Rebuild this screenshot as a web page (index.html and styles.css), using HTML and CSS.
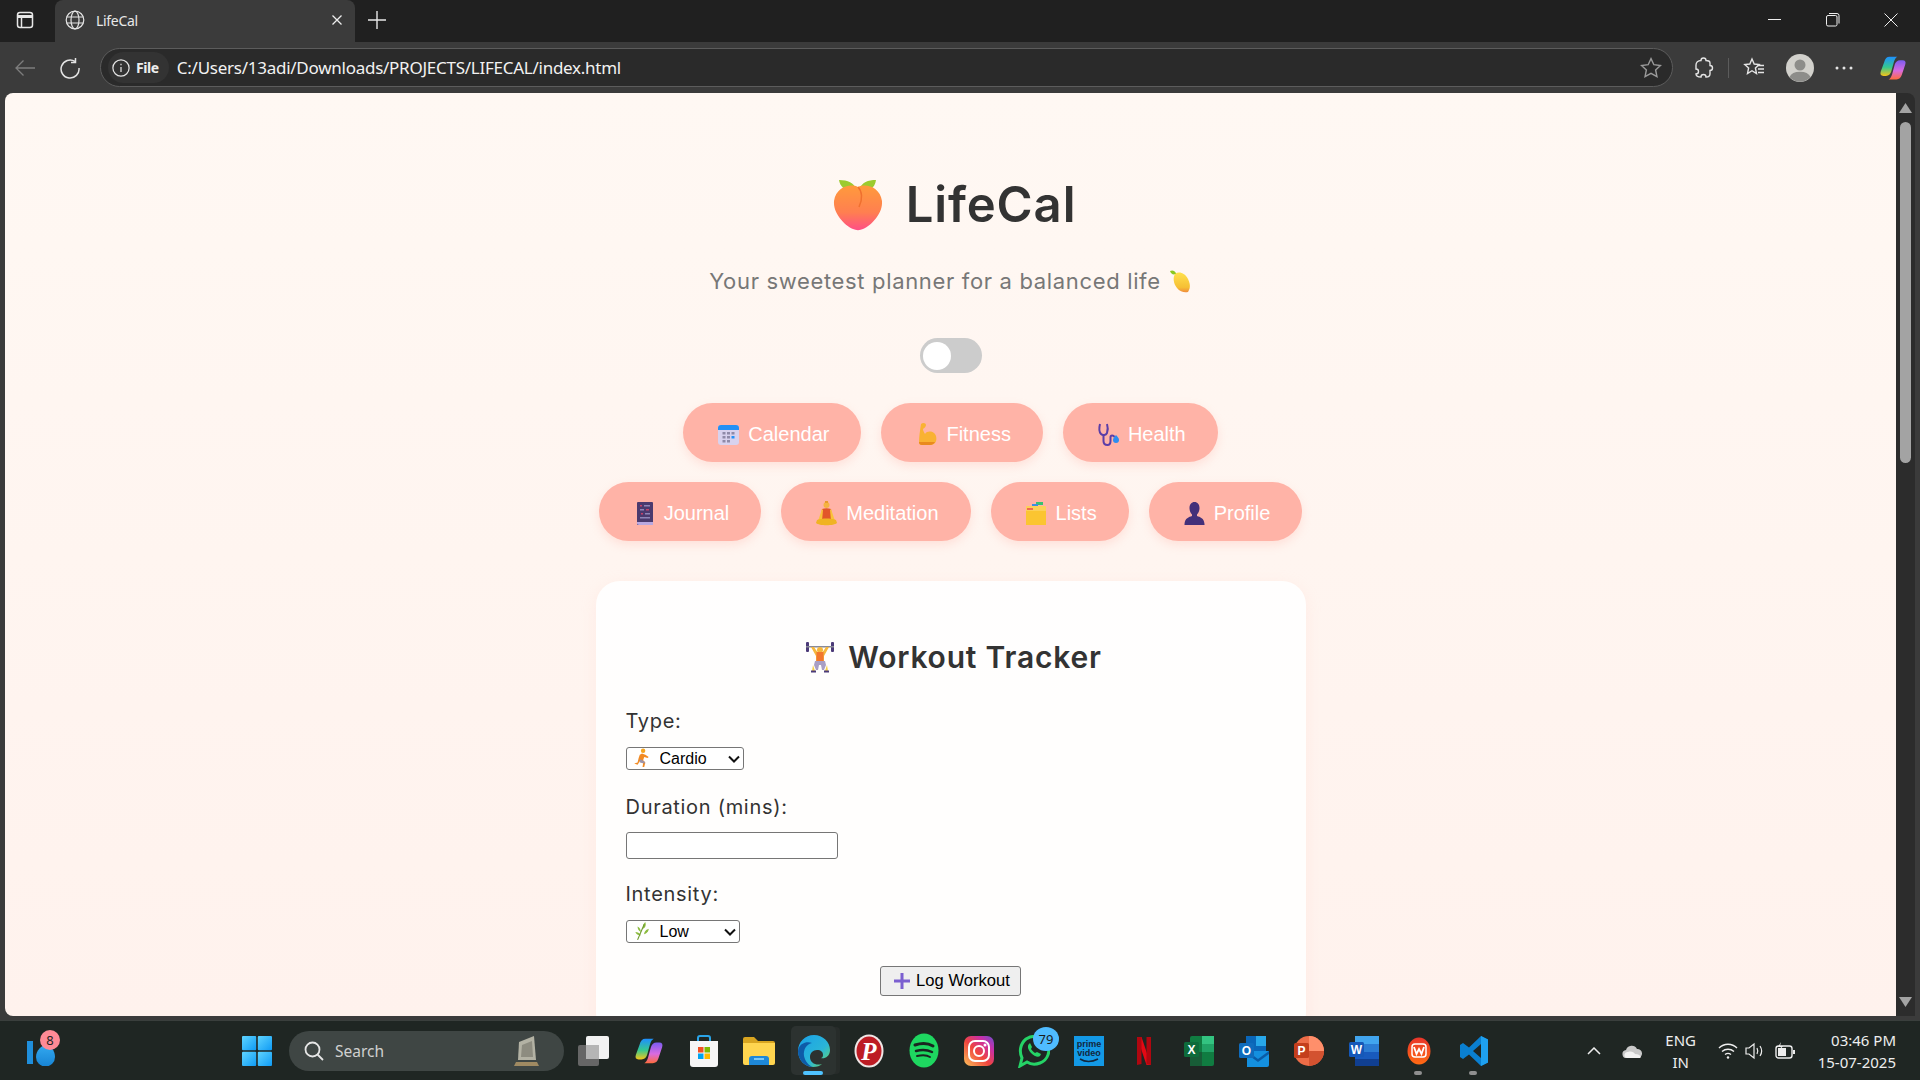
FILE: index.html
```html
<!DOCTYPE html>
<html lang="en">
<head>
    <meta charset="UTF-8">
    <title>LifeCal</title>
    <link rel="stylesheet" href="styles.css">
</head>
<body>
    <!-- shared gradients and the copilot logo -->
    <svg class="sprite" aria-hidden="true">
        <defs>
            <linearGradient id="peachFill" x1="0" y1="0" x2="0" y2="1"><stop offset="0" stop-color="#ff9a3c"/><stop offset=".6" stop-color="#ff7f50"/><stop offset="1" stop-color="#ff4f86"/></linearGradient>
            <linearGradient id="lemonFill" x1="0" y1="0" x2="0" y2="1"><stop offset="0" stop-color="#ffe14d"/><stop offset=".75" stop-color="#f6bf35"/><stop offset="1" stop-color="#f08a3c"/></linearGradient>
            <linearGradient id="copilotA" x1="0" y1="0" x2="0" y2="1"><stop offset="0" stop-color="#1e8fff"/><stop offset=".55" stop-color="#35c98f"/><stop offset="1" stop-color="#f5c518"/></linearGradient>
            <linearGradient id="copilotB" x1="0" y1="0" x2="0" y2="1"><stop offset="0" stop-color="#7a5cf0"/><stop offset=".55" stop-color="#d96be0"/><stop offset="1" stop-color="#ff6b3d"/></linearGradient>
            <linearGradient id="edgeFill" x1="0" y1="0" x2="1" y2="1"><stop offset="0" stop-color="#1aa0e8"/><stop offset=".6" stop-color="#2ab5d8"/><stop offset="1" stop-color="#6fdc5a"/></linearGradient>
            <linearGradient id="igFill" x1="0" y1="1" x2="1" y2="0"><stop offset="0" stop-color="#fdc35a"/><stop offset=".45" stop-color="#f0453e"/><stop offset=".75" stop-color="#c92fa8"/><stop offset="1" stop-color="#6a4fd0"/></linearGradient>
            <linearGradient id="winFill" x1="0" y1="0" x2="1" y2="1"><stop offset="0" stop-color="#5fd4ff"/><stop offset="1" stop-color="#0f9bf5"/></linearGradient>
            <linearGradient id="dropFill" x1="0" y1="0" x2="0" y2="1"><stop offset="0" stop-color="#33a9f0"/><stop offset="1" stop-color="#1784d4"/></linearGradient>
            <linearGradient id="wpsFill" x1="0" y1="0" x2="0" y2="1"><stop offset="0" stop-color="#e8352b"/><stop offset="1" stop-color="#ff6a13"/></linearGradient>
            <symbol id="copilot" viewBox="0 0 32 32">
                <path fill="url(#copilotA)" d="M12 3h9c-2 1-3 3-4 6l-3 11c-1 3-3 5-6 5H5c-3 0-4-2-3-5L6 9c1-4 3-6 6-6z"/>
                <path fill="url(#copilotB)" d="M20 29h-9c2-1 3-3 4-6l3-11c1-3 3-5 6-5h3c3 0 4 2 3 5l-4 12c-1 3-3 5-6 5z"/>
            </symbol>
        </defs>
    </svg>

    <header class="tabstrip">
        <svg class="tab-menu" width="18" height="18" viewBox="0 0 18 18" fill="none" stroke="#e6e6e6" stroke-width="1.5"><rect x="1.5" y="1.5" width="15" height="15" rx="2.5"/><path d="M1.5 5.5h15" stroke-width="3"/><path d="M5.5 6v10"/></svg>
        <div class="tab">
            <svg width="20" height="20" viewBox="0 0 20 20" fill="none" stroke="#e4e4e4" stroke-width="1.2"><circle cx="10" cy="10" r="8.8"/><ellipse cx="10" cy="10" rx="4" ry="8.8"/><path d="M1.6 7h16.800M1.600 13h16.800"/></svg>
            <span class="tab-title">LifeCal</span>
            <svg class="tab-close" width="12" height="12" viewBox="0 0 12 12" stroke="#eee" stroke-width="1.3"><path d="M1.500 1.500l9 9M10.500 1.500l-9 9"/></svg>
        </div>
        <svg class="tab-new" width="18" height="18" viewBox="0 0 18 18" stroke="#e8e8e8" stroke-width="1.4"><path d="M9 0v18M0 9h18"/></svg>
        <div class="window-controls">
            <svg width="14" height="14" viewBox="0 0 14 14" stroke="#eee" stroke-width="1"><path d="M0 6.500h13"/></svg>
            <svg width="14" height="14" viewBox="0 0 14 14" fill="none" stroke="#eee" stroke-width="1"><rect x=".5" y="2.500" width="10.500" height="10.500" rx="1.500"/><path d="M3 .5h8a2 2 0 0 1 2 2v8"/></svg>
            <svg width="14" height="14" viewBox="0 0 14 14" stroke="#eee" stroke-width="1"><path d="M.5.5l13 13M13.500.5l-13 13"/></svg>
        </div>
    </header>

    <div class="toolbar">
        <svg class="nav-btn" width="22" height="18" viewBox="0 0 22 18" fill="none" stroke="#7d7d7d" stroke-width="1.3"><path d="M21 9H2M9.500 1.500L2 9l7.500 7.500"/></svg>
        <svg class="nav-btn reload" width="22" height="22" viewBox="0 0 22 22" fill="none" stroke="#e4e4e4" stroke-width="1.5"><path d="M16 4.500A9 9 0 1 0 20 11"/><path d="M16.500 1v4.500H12"/></svg>
        <div class="omnibox">
            <div class="site-chip">
                <svg width="18" height="18" viewBox="0 0 16 16" fill="none" stroke="#e4e4e4" stroke-width="1.100"><circle cx="8" cy="8" r="7.200"/><path d="M8 7v4.500M8 4.200v1.300"/></svg>
                <span>File</span>
            </div>
            <span class="url">C:/Users/13adi/Downloads/PROJECTS/LIFECAL/index.html</span>
            <svg class="omni-star" width="22" height="22" viewBox="0 0 20 20" fill="none" stroke="#9a9a9a" stroke-width="1.300"><path d="M10 1.500l2.600 5.500 6 .7-4.400 4.100 1.200 6-5.400-3-5.400 3 1.200-6L1.400 7.700l6-.7z"/></svg>
        </div>
        <div class="toolbar-icons">
            <svg width="22" height="22" viewBox="0 0 22 22" fill="none" stroke="#e4e4e4" stroke-width="1.400"><path d="M9 3.500a2.500 2.500 0 0 1 5 0c2 0 4 .3 4 2.500v2.500a2.500 2.500 0 0 1 0 5V17c0 2-2 3-4 3a2.500 2.500 0 0 0-5 0c-3 0-5-1-5-3a2.500 2.500 0 0 0 0-5V8c0-2.500 2-4.500 5-4.500z"/></svg>
            <span class="toolbar-sep"></span>
            <svg width="22" height="22" viewBox="0 0 22 22" fill="none" stroke="#e4e4e4" stroke-width="1.400"><path d="M9 2l2.200 5 5 .5-3.800 3.500 1.100 5.500-4.500-2.800-4.500 2.800 1.100-5.500L1.800 7.500l5-.5z"/><path d="M14.500 8.500h6.500M15 12h6M15 15.500h6"/></svg>
            <svg class="avatar" width="28" height="28" viewBox="0 0 28 28"><circle cx="14" cy="14" r="14" fill="#d2d1cc"/><circle cx="14" cy="11" r="5.500" fill="#8d8d8a"/><path d="M3.500 23a11 7.500 0 0 1 21 0 14 14 0 0 1-21 0z" fill="#8d8d8a"/></svg>
            <svg width="18" height="4" viewBox="0 0 18 4" fill="#e4e4e4"><circle cx="2" cy="2" r="1.500"/><circle cx="9" cy="2" r="1.500"/><circle cx="16" cy="2" r="1.500"/></svg>
            <svg class="toolbar-copilot" width="28" height="28"><use href="#copilot"/></svg>
        </div>
    </div>

    <div class="browser-body">
        <main class="page">
            <h1 class="brand">
                <svg class="brand-icon" width="52" height="52" viewBox="0 0 52 52">
                    <path fill="#9ccb2f" d="M24 10C22 4 16 1 7 1c1 7 7 12 17 11zM27 11C30 3 36 1 44 1c-1 8-7 12-15 12z"/>
                    <path fill="url(#peachFill)" d="M26 8c8-4 22 0 24 14 1 12-10 24-19 28-3 1.500-7 1.500-10 0C12 46 1 34 2 22 4 8 18 4 26 8z"/>
                    <path fill="none" stroke="#f0702f" stroke-width="1.500" d="M26 8c4 4 5 12 1 20"/>
                </svg>
                <span>LifeCal</span>
            </h1>
            <p class="tagline">
                <span>Your sweetest planner for a balanced life</span>
                <svg width="22" height="24" viewBox="0 0 22 24"><path fill="#8cc820" d="M6 4C4 1 2 1 0 2c1 3 3 4 6 3z"/><path fill="url(#lemonFill)" d="M5 5c4-3 10-1 13 5 3 6 2 10 0 13-3 1-8 0-11-4C3 14 3 8 5 5z"/></svg>
            </p>
            <div class="toggle"><span class="toggle-knob"></span></div>

            <nav class="tabs">
                <div class="tabs-row">
                    <a class="pill" href="#calendar">
                        <svg class="pill-icon" viewBox="0 0 27 27"><rect x="3" y="4" width="21" height="20" rx="3" fill="#d8d2ee"/><path d="M3 9V7a3 3 0 0 1 3-3h15a3 3 0 0 1 3 3v2z" fill="#2490f5"/><g fill="#8f8aa8"><rect x="7.500" y="11" width="3" height="2.500"/><rect x="12" y="11" width="3" height="2.500"/><rect x="16.500" y="11" width="3" height="2.500"/><rect x="7.500" y="15" width="3" height="2.500"/><rect x="12" y="15" width="3" height="2.500"/><rect x="16.500" y="15" width="3" height="2.500" fill="#2490f5"/><rect x="7.500" y="19" width="3" height="2.500"/><rect x="12" y="19" width="3" height="2.500"/></g></svg>
                        Calendar
                    </a>
                    <a class="pill" href="#fitness">
                        <svg class="pill-icon" viewBox="0 0 27 27"><path fill="#f9b233" d="M8 3c2-2 5-1 5 1 0 2-2 3-3 4 0 2 1 3 2 5 2-3 6-3 9-1 3 2 3 8 1 10-2 2-5 2-8 2H9c-2 0-3-1-3-3 0-5 1-12 2-18z"/><path fill="#e98a1f" d="M6 21h16c-2 3-4 3-7 3H9c-2 0-3-1-3-3z"/></svg>
                        Fitness
                    </a>
                    <a class="pill" href="#health">
                        <svg class="pill-icon" viewBox="0 0 27 27" fill="none" stroke="#5b3ea8" stroke-width="2"><path d="M5 3c-1 4-1 8 1 10 2 2 5 1 6-1 1-3 1-6 0-9"/><path d="M8.500 14v6c0 3 2 4 4 4s3-1 3-4v-4c0-2 3-2 4 0"/><path fill="#2c8df0" stroke="none" d="M21 14c1 1 3 3 3 5a3 3 0 0 1-6 0c0-2 2-4 3-5z"/></svg>
                        Health
                    </a>
                </div>
                <div class="tabs-row">
                    <a class="pill" href="#journal">
                        <svg class="pill-icon" viewBox="0 0 27 27"><rect x="6" y="2" width="16" height="23" rx="1" fill="#4a3a6e"/><path d="M6 22h16v3H8c-1 0-2-1-2-1.500z" fill="#b9a8e0"/><g fill="#c8436b"><rect x="9" y="5" width="2" height="1.500"/><rect x="15" y="9" width="3" height="1.500"/><rect x="10" y="13" width="2" height="1.500"/></g><g fill="#8f86b8"><rect x="13" y="5" width="6" height="1.500"/><rect x="9" y="9" width="4" height="1.500"/><rect x="14" y="13" width="5" height="1.500"/><rect x="9" y="17" width="10" height="1.500"/></g></svg>
                        Journal
                    </a>
                    <a class="pill" href="#meditation">
                        <svg class="pill-icon" viewBox="0 0 27 27"><circle cx="13.500" cy="5" r="3" fill="#f5b342"/><rect x="12" y="1" width="3" height="2" fill="#e89a2c"/><path d="M9 9c3-1 6-1 9 0l1 10H8z" fill="#e2562a"/><path d="M9 9L5 21h4l1-11zM18 9l4 12h-4l-1-11z" fill="#f9c23c"/><path d="M4 20c5-2 14-2 19 0l1 3c-3 3-18 3-21 0z" fill="#f0b323"/></svg>
                        Meditation
                    </a>
                    <a class="pill" href="#lists">
                        <svg class="pill-icon" viewBox="0 0 27 27"><rect x="13" y="2" width="7" height="3" fill="#38c172"/><rect x="9" y="4" width="6" height="3" fill="#3b8ee0"/><rect x="3" y="6" width="20" height="19" rx="1" fill="#fcd058"/><rect x="4" y="8" width="6" height="2" fill="#ef6a50"/><rect x="3" y="11" width="20" height="14" fill="#fbc531"/></svg>
                        Lists
                    </a>
                    <a class="pill" href="#profile">
                        <svg class="pill-icon" viewBox="0 0 27 27"><path fill="#43307a" d="M13.500 2c3 0 5 2.500 5 6 0 3-1 5-2.500 6.500V16c3 1 7 2 7.500 8v1H3.500v-1c.5-6 4.500-7 7.500-8v-1.500C9.500 13 8.500 11 8.500 8c0-3.500 2-6 5-6z"/></svg>
                        Profile
                    </a>
                </div>
            </nav>

            <section class="card">
                <h2 class="card-title">
                    <svg width="32" height="32" viewBox="0 0 32 32">
                        <g fill="#4b3a78"><rect x="2" y="1" width="3" height="10" rx="1"/><rect x="27" y="1" width="3" height="10" rx="1"/></g>
                        <rect x="2" y="5" width="28" height="1.500" fill="#8a8a96"/>
                        <path d="M7 6h3l4 6h4l4-6h3l-5 9v5h-8v-5z" fill="#f6b73c"/>
                        <circle cx="16" cy="9" r="3" fill="#f6b73c"/>
                        <rect x="12.500" y="11" width="7" height="9" fill="#f2762e"/>
                        <path d="M11 20h10l1 4-2 5h-2l-1-5h-2l-1 5h-2l-2-5z" fill="#a99fc4"/>
                        <path d="M9 24l2 6H8zM23 24l-2 6h3z" fill="#f6cf4a"/>
                        <g fill="#4b3a78"><rect x="7" y="29.500" width="5" height="2"/><rect x="20" y="29.500" width="5" height="2"/></g>
                    </svg>
                    <span>Workout Tracker</span>
                </h2>

                <label class="field-label" for="workoutType">Type:</label>
                <div class="select-wrap">
                    <svg class="select-icon" width="20" height="20" viewBox="0 0 18 18"><circle cx="10" cy="2.500" r="2" fill="#f5a623"/><path d="M9 5l3 1 3 2-1 1-3-1-1 3 2 2-1 4h-1.500l.5-3-3-2-2 3-3-1 3-1 1-4 1-3z" fill="#f28a22"/><path d="M7 10l4 2 1 2-5-1z" fill="#9d94a8"/></svg>
                    <select class="form-select select-type" id="workoutType">
                        <option>Cardio</option>
                        <option>Strength</option>
                        <option>Yoga</option>
                    </select>
                    <svg class="select-arrow" width="12" height="8" viewBox="0 0 12 8" fill="none" stroke="#111" stroke-width="2"><path d="M1 1.500l5 5 5-5"/></svg>
                </div>

                <label class="field-label label-gap" for="duration">Duration (mins):</label>
                <input class="form-input" type="number" id="duration">

                <label class="field-label label-gap-small" for="intensity">Intensity:</label>
                <div class="select-wrap">
                    <svg class="select-icon" width="20" height="20" viewBox="0 0 18 18" fill="#8cbc3f"><path d="M12 1c1 3 0 5-2 6 0-3 0-4 2-6zM5 5c2 1 3 3 3 5-2-1-3-3-3-5zM15 7c0 3-2 4-4 5 0-3 2-4 4-5zM3 10c2 0 4 1 5 3-3 0-4-1-5-3z"/><path d="M11 3L5 17" stroke="#6c9a2b" stroke-width="1"/></svg>
                    <select class="form-select select-level" id="intensity">
                        <option>Low</option>
                        <option>Medium</option>
                        <option>High</option>
                    </select>
                    <svg class="select-arrow" width="12" height="8" viewBox="0 0 12 8" fill="none" stroke="#111" stroke-width="2"><path d="M1 1.500l5 5 5-5"/></svg>
                </div>

                <div class="actions">
                    <button class="log-btn">
                        <svg width="16" height="16" viewBox="0 0 16 16" fill="#7b5fd0"><path d="M6.500 0h3v6.500H16v3H9.500V16h-3V9.500H0v-3h6.500z"/></svg>
                        Log Workout
                    </button>
                </div>
            </section>
        </main>
        <div class="scrollbar">
            <svg width="13" height="10" viewBox="0 0 13 10" fill="#a3a3a3"><path d="M6.500 0L13 10H0z"/></svg>
            <span class="scroll-thumb"></span>
            <svg class="scroll-down" width="13" height="10" viewBox="0 0 13 10" fill="#a3a3a3"><path d="M0 0h13L6.500 10z"/></svg>
        </div>
    </div>

    <footer class="taskbar">
        <div class="widget">
            <svg width="36" height="30" viewBox="0 0 36 30"><rect x="0" y="5" width="6" height="23" fill="#1f8fdc"/><path d="M19 9c4 0 9 5 9 12a9 9 0 0 1-19 0c0-7 6-12 10-12z" fill="url(#dropFill)"/></svg>
            <span class="widget-badge">8</span>
        </div>
        <svg class="win-logo" width="30" height="30" viewBox="0 0 30 30" fill="url(#winFill)"><rect width="14.200" height="14.200" rx="1"/><rect x="15.800" width="14.200" height="14.200" rx="1"/><rect y="15.800" width="14.200" height="14.200" rx="1"/><rect x="15.800" y="15.800" width="14.200" height="14.200" rx="1"/></svg>
        <div class="search">
            <svg width="20" height="20" viewBox="0 0 20 20" fill="none" stroke="#e6e6e6" stroke-width="1.800"><circle cx="8.500" cy="8.500" r="7"/><path d="M13.500 13.500L19 19"/></svg>
            <span class="search-text">Search</span>
            <svg class="search-art" width="26" height="32" viewBox="0 0 26 32"><path d="M6 7L21 1l2 24H5z" fill="#b3b2a4"/><path d="M9 10l10-4 1 16H8z" fill="#8d8c80"/><path d="M3 27h21l2 4H1z" fill="#a08a62"/></svg>
        </div>
        <div class="apps">
            <span class="app"><svg width="32" height="30" viewBox="0 0 32 30"><rect x="0" y="9" width="21" height="21" rx="2" fill="#666"/><rect x="8" y="0" width="23" height="23" rx="2" fill="#f2f2f2"/><rect x="8" y="9" width="13" height="14" fill="#b5b5b5"/></svg></span>
            <span class="app"><svg width="30" height="30"><use href="#copilot"/></svg></span>
            <span class="app"><svg width="30" height="34" viewBox="0 0 30 34"><path d="M9 8V4a2 2 0 0 1 2-2h8a2 2 0 0 1 2 2v4" fill="none" stroke="#2aa4e8" stroke-width="2"/><path d="M1 7h28v23a3 3 0 0 1-3 3H4a3 3 0 0 1-3-3z" fill="#f6f6f6"/><rect x="9" y="13" width="5.500" height="5.500" fill="#f25022"/><rect x="15.500" y="13" width="5.500" height="5.500" fill="#7fba00"/><rect x="9" y="19.500" width="5.500" height="5.500" fill="#00a4ef"/><rect x="15.500" y="19.500" width="5.500" height="5.500" fill="#ffb900"/></svg></span>
            <span class="app"><svg width="32" height="28" viewBox="0 0 32 28"><path d="M0 2a2 2 0 0 1 2-2h9l4 4h15a2 2 0 0 1 2 2v4H0z" fill="#d9a520"/><path d="M0 6h32v20a2 2 0 0 1-2 2H2a2 2 0 0 1-2-2z" fill="#ffd54f"/><path d="M6 28v-6a3 3 0 0 1 3-3h14a3 3 0 0 1 3 3v6z" fill="#1e88d8"/><rect x="11" y="21" width="10" height="2" fill="#7cc8f5"/></svg></span>
            <span class="app app-active"><svg width="32" height="34" viewBox="0 0 32 34"><path d="M16 1C7 1 0 8 0 17c0 9 7 16 15 16 4 0 7-1 9-3-6 2-12-1-12-7 0-4 3-7 7-7 4 0 6 2 6 5 0 2-1 3-2 3 3 1 9-1 9-8C32 8 25 1 16 1z" fill="url(#edgeFill)"/><path d="M0 17C1 9 9 7 14 9c-5 1-9 6-8 13 1 5 5 10 9 11C7 33 0 26 0 17z" fill="#0e5aa8"/></svg></span>
            <span class="app"><svg width="30" height="34" viewBox="0 0 30 34"><ellipse cx="15" cy="17" rx="14.500" ry="16.500" fill="#f0e6e6"/><ellipse cx="15" cy="17" rx="12.500" ry="14.500" fill="#bd1c24"/><text class="pin-letter" x="15" y="26" text-anchor="middle">P</text></svg></span>
            <span class="app"><svg width="30" height="35" viewBox="0 0 30 35" fill="none"><ellipse cx="15" cy="17.500" rx="14.500" ry="17" fill="#1ed760"/><g stroke="#1a2420" stroke-linecap="round"><path d="M6 12c6-2 13-2 18 1" stroke-width="3"/><path d="M7 18c5-1.500 11-1.500 16 1" stroke-width="2.500"/><path d="M8 23c5-1 10-1 13 1" stroke-width="2"/></g></svg></span>
            <span class="app"><svg width="30" height="30" viewBox="0 0 30 30" fill="none"><rect width="30" height="30" rx="7" fill="url(#igFill)"/><rect x="5" y="5" width="20" height="20" rx="6" stroke="#fff" stroke-width="2"/><circle cx="15" cy="15" r="5" stroke="#fff" stroke-width="2"/><circle cx="21" cy="9" r="1.500" fill="#fff"/></svg></span>
            <span class="app">
                <svg width="32" height="34" viewBox="0 0 32 34" fill="none"><path d="M2 32l2-8C1 18 2 10 8 5c7-5 17-3 21 4 4 8 1 17-7 20-5 2-10 1-13-1z" stroke="#25d366" stroke-width="3"/><path d="M11 10c-2 2-1 6 2 9 3 3 7 5 9 3l1-2-4-2-2 1c-2-1-3-3-4-4l1-2-2-4z" fill="#25d366"/></svg>
                <span class="app-badge">79</span>
            </span>
            <span class="app"><svg width="30" height="30" viewBox="0 0 30 30"><rect width="30" height="30" fill="#1399e6"/><text class="prime-text" x="15" y="11" text-anchor="middle">prime</text><text class="prime-text" x="15" y="20" text-anchor="middle">video</text><path d="M6 23c5 3 12 3 18 0" fill="none" stroke="#12263c" stroke-width="1.500"/></svg></span>
            <span class="app"><svg width="16" height="30" viewBox="0 0 16 30"><path d="M1 1h4.500L15 29h-4.500z" fill="#e50914"/><path d="M1 1h4.500v27L1 29zM10.500 1H15v28l-4.500-1z" fill="#b00710"/></svg></span>
            <span class="app"><svg width="30" height="32" viewBox="0 0 30 32"><rect x="6" y="1" width="24" height="30" rx="2" fill="#107c41"/><rect x="18" y="1" width="12" height="8" fill="#33c481"/><rect x="18" y="9" width="12" height="8" fill="#21a366"/><rect x="6" y="17" width="12" height="14" fill="#185c37"/><rect y="7" width="15" height="15" rx="1.500" fill="#0e6b3b"/><text class="office-letter" x="7.500" y="19" text-anchor="middle">X</text></svg></span>
            <span class="app"><svg width="30" height="32" viewBox="0 0 30 32"><rect x="7" y="1" width="20" height="20" fill="#0a66b8"/><rect x="17" y="1" width="10" height="10" fill="#28a8ea"/><path d="M8 16h22v14a2 2 0 0 1-2 2H8z" fill="#1490df"/><path d="M8 16l11 8 11-8v3l-11 8-11-8z" fill="#0a5ba5"/><rect y="8" width="15" height="15" rx="1.500" fill="#0f6cbd"/><text class="office-letter" x="7.500" y="20" text-anchor="middle">O</text></svg></span>
            <span class="app"><svg width="30" height="34" viewBox="0 0 30 34"><circle cx="15" cy="17" r="15" fill="#ed6c47"/><path d="M15 2a15 15 0 0 1 15 15H15z" fill="#ff8f6b"/><path d="M15 17h15a15 15 0 0 1-15 15z" fill="#d35230"/><rect y="9" width="15" height="15" rx="1.500" fill="#c43e1c"/><text class="office-letter" x="7.500" y="21" text-anchor="middle">P</text></svg></span>
            <span class="app"><svg width="30" height="32" viewBox="0 0 30 32"><rect x="6" y="1" width="24" height="30" rx="2" fill="#2b7cd3"/><rect x="6" y="1" width="24" height="8" fill="#41a5ee"/><rect x="6" y="17" width="24" height="7" fill="#185abd"/><rect x="6" y="24" width="24" height="7" fill="#103f91"/><rect y="7" width="15" height="15" rx="1.500" fill="#1558b8"/><text class="office-letter" x="7.500" y="19" text-anchor="middle">W</text></svg></span>
            <span class="app app-open"><svg width="24" height="28" viewBox="0 0 24 28"><ellipse cx="12" cy="14" rx="11.500" ry="13.500" fill="url(#wpsFill)"/><rect x="5" y="7" width="14" height="13" rx="3" fill="none" stroke="#fff" stroke-width="1.500"/><path d="M7 10l2.500 7L12 12l2.500 5L17 10" fill="none" stroke="#fff" stroke-width="1.800"/></svg></span>
            <span class="app app-open"><svg width="30" height="32" viewBox="0 0 30 32"><path fill="#0a7fd0" d="M22 1l7 3.500v23L22 31 10 19.500 4 24l-3-2V10l3-2 6 4.500zM22 9l-8 7 8 7z" fill-rule="evenodd"/><path fill="#1ea0ef" d="M22 1l7 3.500v23L22 31z"/></svg></span>
        </div>
        <div class="tray">
            <svg class="tray-chevron" width="14" height="8" viewBox="0 0 14 8" fill="none" stroke="#eee" stroke-width="1.500"><path d="M1 7l6-6 6 6"/></svg>
            <svg class="tray-cloud" width="20" height="14" viewBox="0 0 20 14"><path d="M5 14a4 4 0 0 1-1-8 6 6 0 0 1 11-1 4.500 4.500 0 0 1 1 9z" fill="#c9c9c9"/><path d="M5 14a3 3 0 0 1 1-6c3-1 6 0 7 2 3 0 5 1 6 3l-1 1z" fill="#f2f2f2"/></svg>
            <div class="tray-lang">ENG<br>IN</div>
            <svg class="tray-wifi" width="20" height="16" viewBox="0 0 20 16" fill="none" stroke="#eee" stroke-width="1.400"><path d="M1 5c5-5 13-5 18 0M4 8.500c3.500-3 8.500-3 12 0M7 11.500c2-1.500 4-1.500 6 0"/><circle cx="10" cy="14.500" r="1.200" fill="#eee" stroke="none"/></svg>
            <svg class="tray-sound" width="20" height="18" viewBox="0 0 20 18" fill="none" stroke="#eee" stroke-width="1.200"><path d="M1 6h3l5-4v14l-5-4H1z"/><path d="M12 6c1 2 1 4 0 6M15 4c2 3 2 7 0 10"/></svg>
            <svg class="tray-battery" width="20" height="18" viewBox="0 0 20 18"><rect x="1" y="4" width="16" height="12" rx="2.500" fill="none" stroke="#eee" stroke-width="1.400"/><rect x="3" y="6" width="8" height="8" fill="#eee"/><rect x="18" y="8" width="2" height="4" fill="#eee"/><path d="M6 0L3 5h3l-1 3 3-4H5z" fill="#eee"/></svg>
            <div class="tray-clock">03:46 PM<br>15-07-2025</div>
        </div>
    </footer>
</body>
</html>
```

FILE: styles.css
```css
* {
    box-sizing: border-box;
}
html, body {
    height: 100%;
}
body {
    margin: 0;
    display: flex;
    flex-direction: column;
    overflow: hidden;
    background-color: #3b3b3b;
    font-family: "Liberation Sans", Arial, sans-serif;
}
.sprite {
    display: block;
    width: 0;
    height: 0;
}

/* browser frame */
.tabstrip {
    display: flex;
    align-items: center;
    height: 42px;
    padding-bottom: 2px;
    background-color: #202020;
    flex: none;
}
.tab-menu {
    margin-left: 16px;
    margin-right: 21px;
}
.tab {
    display: flex;
    align-items: center;
    align-self: stretch;
    width: 300px;
    margin-bottom: -2px;
    padding: 0 12px 2px 10px;
    background-color: #3b3b3b;
    border-radius: 8px 8px 0 0;
}
.tab-title {
    margin-left: 11px;
    color: #e8e8e8;
    font: 14px "Noto Sans", sans-serif;
    letter-spacing: -0.3px;
}
.tab-close {
    margin-left: auto;
}
.tab-new {
    margin-left: 13px;
}
.window-controls {
    display: flex;
    gap: 44px;
    margin-left: auto;
    padding-right: 22px;
}
.toolbar {
    display: flex;
    align-items: center;
    height: 51px;
    flex: none;
    background-color: #3b3b3b;
}
.nav-btn {
    margin-left: 14px;
}
.reload {
    margin-left: 23px;
    margin-right: 19px;
}
.omnibox {
    display: flex;
    align-items: center;
    width: 1573px;
    height: 39px;
    padding: 0 10px 0 7px;
    background-color: #2a2a2a;
    border: 1px solid #5c5c5c;
    border-radius: 20px;
}
.site-chip {
    display: flex;
    align-items: center;
    gap: 6px;
    height: 31px;
    padding: 0 10px 0 4px;
    border-radius: 16px;
    background-color: #333;
    color: #eee;
    font: 700 14px "Noto Sans", sans-serif;
    letter-spacing: -0.4px;
}
.url {
    margin-left: 8px;
    color: #f2f2f2;
    font: 17px "Noto Sans", sans-serif;
    letter-spacing: -0.26px;
}
.omni-star {
    margin-left: auto;
}
.toolbar-icons {
    display: flex;
    align-items: center;
    padding-left: 19px;
}
.toolbar-sep {
    width: 1px;
    height: 20px;
    margin: 0 14px;
    background-color: #5c5c5c;
}
.avatar {
    margin-left: 21px;
}
.toolbar-icons svg:nth-of-type(4) {
    margin-left: 21px;
}
.toolbar-copilot {
    margin-left: 26px;
}
.browser-body {
    display: flex;
    height: 923px;
    flex: none;
    padding-left: 5px;
    padding-right: 5px;
}
.scrollbar {
    display: flex;
    flex-direction: column;
    align-items: center;
    width: 19px;
    padding-top: 10px;
    background-color: #2c2c2c;
    border-radius: 0 8px 0 0;
}
.scroll-thumb {
    width: 11px;
    height: 341px;
    margin-top: 9px;
    background-color: #a3a3a3;
    border-radius: 6px;
}
.scroll-down {
    margin-top: auto;
    margin-bottom: 9px;
}

/* the page itself */
.page {
    flex: 1;
    overflow: hidden;
    text-align: center;
    background: linear-gradient(to bottom, #fff8f3, #fff2ed);
    border-radius: 8px 0 0 8px;
    color: #333;
}
.brand {
    display: flex;
    align-items: center;
    justify-content: center;
    gap: 22px;
    height: 60px;
    margin: 82px 0 0;
    padding-left: 7px;
    font: 600 49px/58px Inter, sans-serif;
    letter-spacing: 0.9px;
}
.tagline {
    display: flex;
    align-items: center;
    justify-content: center;
    gap: 9px;
    height: 34px;
    margin: 29px 0 0;
    color: #777;
    font: 22px Inter, sans-serif;
    letter-spacing: 0.66px;
}
.toggle {
    display: flex;
    align-items: center;
    width: 62px;
    height: 35px;
    margin: 40px auto 0;
    padding-left: 3px;
    background-color: #ccc;
    border-radius: 18px;
}
.toggle-knob {
    width: 28px;
    height: 28px;
    border-radius: 50%;
    background-color: #fff;
}
.tabs {
    display: flex;
    flex-direction: column;
    gap: 20px;
    margin-top: 30px;
}
.tabs-row {
    display: flex;
    justify-content: center;
    gap: 20px;
}
.pill {
    display: flex;
    align-items: center;
    gap: 6px;
    height: 59px;
    padding: 3px 32px 0;
    background-color: #ffb3a7;
    border-radius: 30px;
    box-shadow: 0 4px 10px rgba(255, 179, 167, 0.3);
    color: #fff;
    font-size: 20px;
    text-decoration: none;
}
.pill-icon {
    width: 27px;
    height: 27px;
}
.card {
    width: 710px;
    margin: 40px auto 0;
    padding: 56px 30px 40px;
    background-color: rgba(255, 255, 255, 0.88);
    border-radius: 24px;
    box-shadow: 0 4px 16px rgba(255, 200, 190, 0.2);
    text-align: left;
}
.card-title {
    display: flex;
    align-items: center;
    justify-content: center;
    gap: 12px;
    height: 40px;
    margin: 0;
    padding-left: 5px;
    font: 600 30px Inter, sans-serif;
    letter-spacing: 0.8px;
}
.field-label {
    display: block;
    height: 30px;
    margin-top: 29px;
    font: 20px/31px Inter, sans-serif;
    letter-spacing: 0.7px;
}
.label-gap {
    margin-top: 22px;
}
.label-gap-small {
    margin-top: 20px;
}
.select-wrap {
    position: relative;
    width: fit-content;
    height: 23px;
    margin-top: 11px;
}
.select-icon {
    position: absolute;
    left: 6px;
    top: 1px;
}
.select-arrow {
    position: absolute;
    right: 4px;
    top: 8px;
    pointer-events: none;
}
.form-select {
    display: block;
    height: 23px;
    padding: 0 0 0 33px;
    appearance: none;
    background-color: #fff;
    border: 1px solid #767676;
    border-radius: 3px;
    color: #000;
    font: 16px "Liberation Sans", Arial, sans-serif;
}
.select-type {
    width: 118px;
}
.select-level {
    width: 114px;
}
.form-input {
    display: block;
    width: 212px;
    height: 27px;
    margin-top: 10px;
    background-color: #fff;
    border: 1px solid #767676;
    border-radius: 3px;
}
.actions {
    display: flex;
    justify-content: center;
    margin-top: 23px;
}
.log-btn {
    display: flex;
    align-items: center;
    gap: 6px;
    height: 30px;
    padding: 0 10px 0 13px;
    background-color: #efefef;
    border: 1px solid #767676;
    border-radius: 3px;
    color: #000;
    font: 16.6px "Liberation Sans", Arial, sans-serif;
}

/* windows taskbar */
.taskbar {
    display: flex;
    align-items: center;
    height: 60px;
    margin-top: 4px;
    flex: none;
    background-color: #1f2623;
    border-top: 1px solid #3a3f3d;
    color: #eee;
    font-family: "Noto Sans", sans-serif;
}
.widget {
    position: relative;
    width: 242px;
    height: 30px;
    padding-left: 27px;
    flex: none;
}
.widget-badge {
    position: absolute;
    left: 40px;
    top: -6px;
    width: 20px;
    height: 20px;
    border-radius: 50%;
    background-color: #ff8a96;
    color: #222;
    font-size: 13px;
    line-height: 20px;
    text-align: center;
}
.win-logo {
    flex: none;
}
.search {
    display: flex;
    align-items: center;
    width: 275px;
    height: 40px;
    margin-left: 17px;
    padding-left: 15px;
    background-color: #3f4644;
    border-radius: 20px;
    flex: none;
}
.search-text {
    margin-left: 11px;
    color: #d0d0d0;
    font-size: 15.5px;
}
.search-art {
    margin-left: auto;
    margin-right: 25px;
}
.apps {
    display: flex;
    align-self: stretch;
    margin-left: 2px;
}
.app {
    position: relative;
    display: flex;
    align-items: center;
    justify-content: center;
    width: 55px;
}
.app-active::before {
    content: "";
    position: absolute;
    left: 5px;
    right: 5px;
    top: 5px;
    bottom: 5px;
    background-color: #2c3230;
    border-radius: 5px;
    box-shadow: 5px 0 0 -1px #272c2a;
}
.app-active svg {
    position: relative;
}
.app-active::after {
    content: "";
    position: absolute;
    left: 17px;
    bottom: 5px;
    width: 20px;
    height: 4px;
    border-radius: 2px;
    background-color: #4fc3ff;
}
.app-open::after {
    content: "";
    position: absolute;
    left: 23px;
    bottom: 5px;
    width: 8px;
    height: 4px;
    border-radius: 2px;
    background-color: #8f8f8f;
}
.app-badge {
    position: absolute;
    left: 27px;
    top: 6px;
    width: 26px;
    height: 24px;
    border-radius: 50%;
    background-color: #4fbcff;
    color: #1a1a1a;
    font-size: 13px;
    line-height: 24px;
    text-align: center;
}
.pin-letter {
    fill: #fff;
    font: italic 700 25px "Liberation Serif", serif;
}
.prime-text {
    fill: #12263c;
    font: 700 9px "Liberation Sans", sans-serif;
}
.office-letter {
    fill: #fff;
    font: 700 12px "Liberation Sans", sans-serif;
}
.tray {
    display: flex;
    align-items: center;
    margin-left: auto;
    padding-right: 24px;
}
.tray-cloud {
    margin-left: 21px;
}
.tray-lang {
    width: 50px;
    margin-left: 14px;
    font-size: 15px;
    line-height: 22px;
    text-align: center;
}
.tray-wifi {
    margin-left: 12px;
}
.tray-sound {
    margin-left: 7px;
}
.tray-battery {
    margin-left: 10px;
}
.tray-clock {
    margin-left: 23px;
    font-size: 15px;
    line-height: 22px;
    text-align: right;
}
```
